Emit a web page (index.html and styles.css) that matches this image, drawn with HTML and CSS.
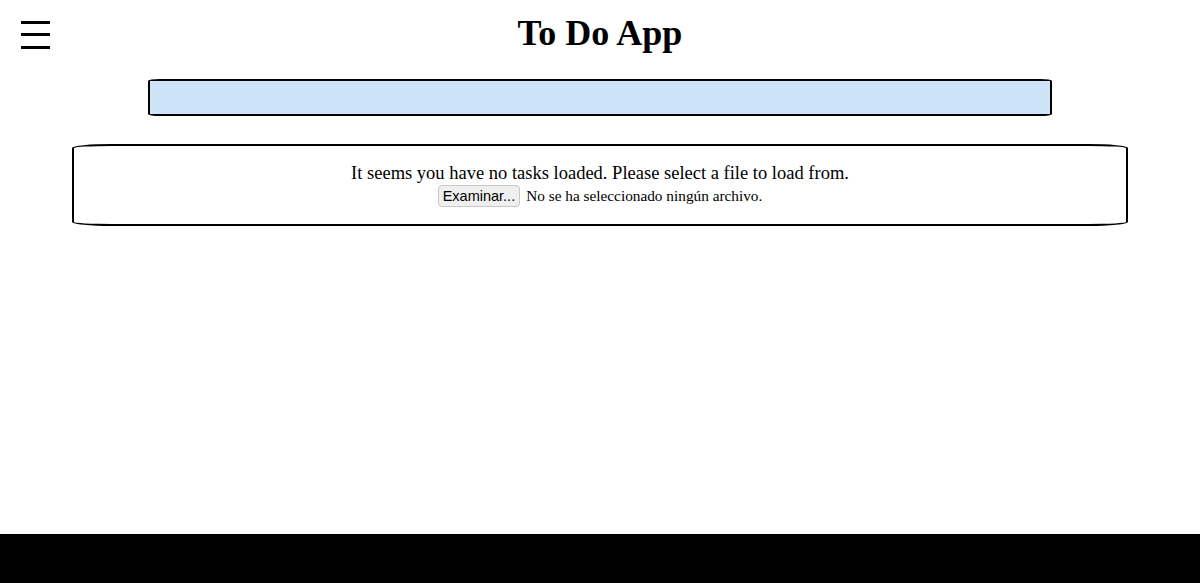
FILE: index.html
```html
<!DOCTYPE html>
<html lang="en">
<head>
<meta charset="utf-8">
<title>To Do App</title>
<link rel="stylesheet" href="styles.css">
</head>
<body>
<div class="page">
  <header class="header">
    <button class="menu-btn" aria-label="Menu">
      <svg width="31" height="31" viewBox="0 0 31 31"><rect x="1" y="2" width="29" height="3" fill="#000"/><rect x="1" y="14" width="29" height="3" fill="#000"/><rect x="1" y="27" width="29" height="3" fill="#000"/></svg>
    </button>
    <h1 class="title">To Do App</h1>
    <div class="spacer"></div>
  </header>
  <div class="search-bar"></div>
  <section class="empty-box">
    <p class="empty-msg">It seems you have no tasks loaded. Please select a file to load from.</p>
    <div class="file-row">
      <span class="file-btn">Examinar...</span>
      <span class="file-name">No se ha seleccionado ningún archivo.</span>
    </div>
  </section>
  <div class="fill"></div>
  <footer class="footer"></footer>
</div>
</body>
</html>
```
FILE: styles.css
```css
html, body {
  margin: 0;
  padding: 0;
  height: 100%;
  background: #fff;
}
body {
  font-family: "Liberation Serif", "DejaVu Serif", serif;
  color: #000;
}
.page {
  display: flex;
  flex-direction: column;
  height: 583px;
}
.header {
  display: grid;
  grid-template-columns: 1fr auto 1fr;
  align-items: center;
  height: 66px;
}
.menu-btn {
  justify-self: start;
  margin-left: 20px;
  margin-top: 2px;
  width: 31px;
  height: 31px;
  padding: 0;
  border: 0;
  background: none;
  display: flex;
}
.title {
  margin: 0;
  font-size: 36px;
  font-weight: bold;
  line-height: 1;
  padding-top: 0;
}
.search-bar {
  margin: 13px auto 0;
  width: 900px;
  height: 33px;
  background: #cde4f8;
  border: 2px solid #000;
  border-radius: 12px / 2px;
}
.empty-box {
  margin: 28px 72px 0;
  height: 62px;
  border: 2px solid #000;
  border-radius: 40px / 4px;
  display: flex;
  flex-direction: column;
  align-items: center;
  padding-top: 16px;
  box-sizing: content-box;
}
.empty-msg {
  margin: 0;
  font-size: 18.5px;
  line-height: 22px;
}
.file-row {
  display: flex;
  align-items: center;
  gap: 6px;
  margin-top: 1px;
}
.file-btn {
  font-family: "Liberation Sans", Arial, sans-serif;
  font-size: 14.5px;
  line-height: 20px;
  padding: 0 4px;
  background: #efefef;
  border: 1px solid #c8c8c8;
  border-radius: 4px;
  color: #000;
}
.file-name {
  font-size: 15.3px;
}
.fill {
  flex: 1;
}
.footer {
  height: 49px;
  background: #000;
}
```
